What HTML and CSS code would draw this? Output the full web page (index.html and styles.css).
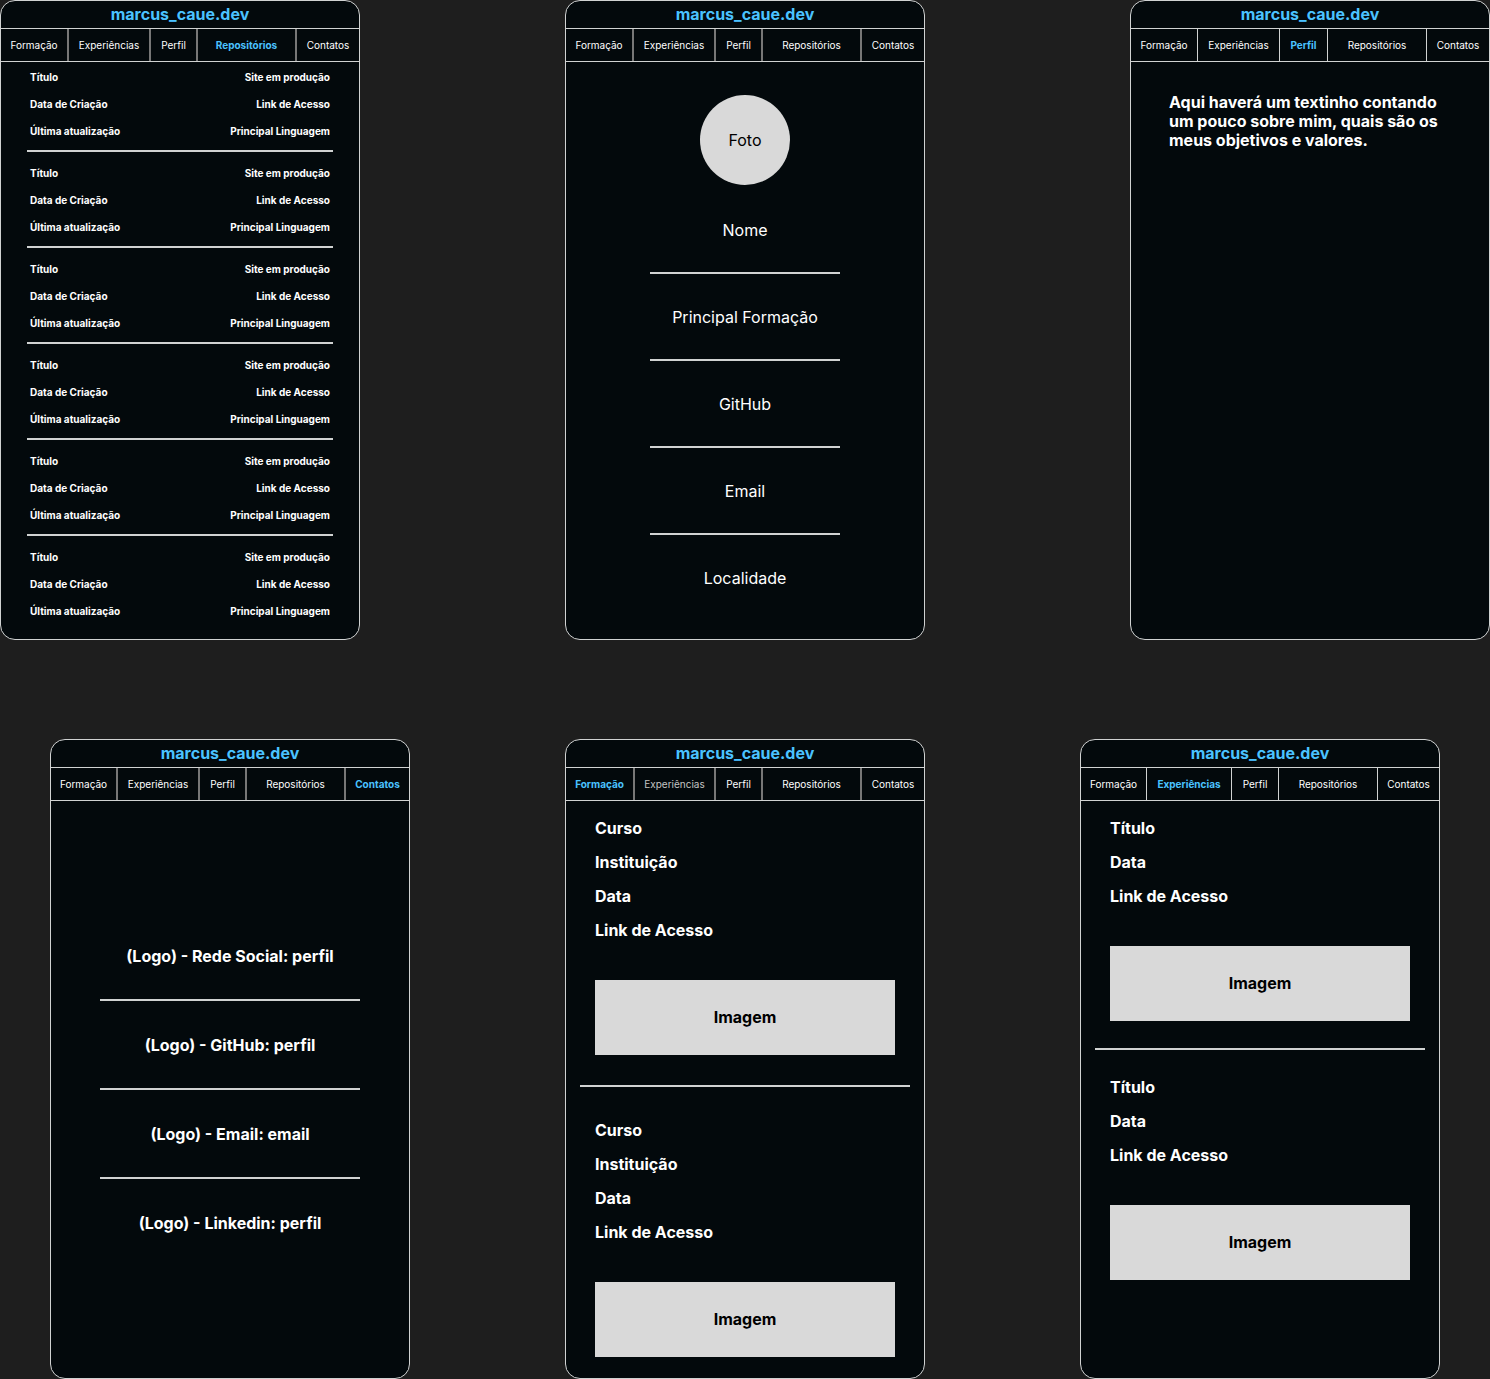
FILE: index.html
```html
<!DOCTYPE html>
<html lang="pt-BR">
<head>
  <meta charset="utf-8">
  <meta name="viewport" content="width=device-width, initial-scale=1">
  <title>marcus_caue.dev</title>
  <link rel="stylesheet" href="styles.css">
</head>
<body>
  <main class="board">
    <div class="board-row">

      <section class="screen">
        <h2 class="brand">marcus_caue.dev</h2>
        <nav class="tabs">
          <a href="#formacao">Formação</a>
          <a href="#experiencias">Experiências</a>
          <a href="#perfil">Perfil</a>
          <a href="#repositorios" class="active">Repositórios</a>
          <a href="#contatos">Contatos</a>
        </nav>
        <ul class="repos" id="repositorios">
          <li><span>Título</span><span>Site em produção</span><span>Data de Criação</span><a href="#repo-1">Link de Acesso</a><span>Última atualização</span><span>Principal Linguagem</span></li>
          <li><span>Título</span><span>Site em produção</span><span>Data de Criação</span><a href="#repo-2">Link de Acesso</a><span>Última atualização</span><span>Principal Linguagem</span></li>
          <li><span>Título</span><span>Site em produção</span><span>Data de Criação</span><a href="#repo-3">Link de Acesso</a><span>Última atualização</span><span>Principal Linguagem</span></li>
          <li><span>Título</span><span>Site em produção</span><span>Data de Criação</span><a href="#repo-4">Link de Acesso</a><span>Última atualização</span><span>Principal Linguagem</span></li>
          <li><span>Título</span><span>Site em produção</span><span>Data de Criação</span><a href="#repo-5">Link de Acesso</a><span>Última atualização</span><span>Principal Linguagem</span></li>
          <li><span>Título</span><span>Site em produção</span><span>Data de Criação</span><a href="#repo-6">Link de Acesso</a><span>Última atualização</span><span>Principal Linguagem</span></li>
        </ul>
      </section>

      <section class="screen">
        <h2 class="brand">marcus_caue.dev</h2>
        <nav class="tabs">
          <a href="#formacao">Formação</a>
          <a href="#experiencias">Experiências</a>
          <a href="#perfil">Perfil</a>
          <a href="#repositorios">Repositórios</a>
          <a href="#contatos">Contatos</a>
        </nav>
        <div class="home">
          <div class="photo">Foto</div>
          <ul class="facts">
            <li>Nome</li>
            <li>Principal Formação</li>
            <li>GitHub</li>
            <li>Email</li>
            <li>Localidade</li>
          </ul>
        </div>
      </section>

      <section class="screen">
        <h2 class="brand">marcus_caue.dev</h2>
        <nav class="tabs tabs-perfil">
          <a href="#formacao">Formação</a>
          <a href="#experiencias">Experiências</a>
          <a href="#perfil" class="active">Perfil</a>
          <a href="#repositorios">Repositórios</a>
          <a href="#contatos">Contatos</a>
        </nav>
        <p class="about" id="perfil">Aqui haverá um textinho contando um pouco sobre mim, quais são os meus objetivos e valores.</p>
      </section>
    </div>

    <div class="board-row board-row-inset">

      <section class="screen">
        <h2 class="brand">marcus_caue.dev</h2>
        <nav class="tabs tabs-contatos">
          <a href="#formacao">Formação</a>
          <a href="#experiencias">Experiências</a>
          <a href="#perfil">Perfil</a>
          <a href="#repositorios">Repositórios</a>
          <a href="#contatos" class="active">Contatos</a>
        </nav>
        <ul class="contacts" id="contatos">
          <li>(Logo) - Rede Social: perfil</li>
          <li>(Logo) - GitHub: perfil</li>
          <li>(Logo) - Email: email</li>
          <li>(Logo) - Linkedin: perfil</li>
        </ul>
      </section>

      <section class="screen">
        <h2 class="brand">marcus_caue.dev</h2>
        <nav class="tabs tabs-formacao">
          <a href="#formacao" class="active">Formação</a>
          <a href="#experiencias" class="muted">Experiências</a>
          <a href="#perfil">Perfil</a>
          <a href="#repositorios">Repositórios</a>
          <a href="#contatos">Contatos</a>
        </nav>
        <div class="entries" id="formacao">
          <article class="entry">
            <span>Curso</span>
            <span>Instituição</span>
            <span>Data</span>
            <a href="#curso-1">Link de Acesso</a>
            <div class="image">Imagem</div>
          </article>
          <article class="entry">
            <span>Curso</span>
            <span>Instituição</span>
            <span>Data</span>
            <a href="#curso-2">Link de Acesso</a>
            <div class="image">Imagem</div>
          </article>
        </div>
      </section>

      <section class="screen">
        <h2 class="brand">marcus_caue.dev</h2>
        <nav class="tabs tabs-experiencias">
          <a href="#formacao">Formação</a>
          <a href="#experiencias" class="active">Experiências</a>
          <a href="#perfil">Perfil</a>
          <a href="#repositorios">Repositórios</a>
          <a href="#contatos">Contatos</a>
        </nav>
        <div class="entries entries-compact" id="experiencias">
          <article class="entry">
            <span>Título</span>
            <span>Data</span>
            <a href="#experiencia-1">Link de Acesso</a>
            <div class="image">Imagem</div>
          </article>
          <article class="entry">
            <span>Título</span>
            <span>Data</span>
            <a href="#experiencia-2">Link de Acesso</a>
            <div class="image">Imagem</div>
          </article>
        </div>
      </section>
    </div>
  </main>
</body>
</html>
```
FILE: styles.css
```css
:root {
  --canvas: #1e1e1e;
  --surface: #03090c;
  --fill: #d9d9d9;
  --line: #d0d2d2;
  --line-soft: #777777;
  --accent: #4ac2ff;
}

* {
  box-sizing: border-box;
}

body {
  margin: 0;
  background: var(--canvas);
  color: #ffffff;
  font: 16px/19px Inter, sans-serif;
}

a {
  color: inherit;
  text-decoration: none;
}

ul {
  margin: 0;
  padding: 0;
  list-style: none;
}

/* Board: two rows of phone screens */
.board {
  display: flex;
  flex-direction: column;
  gap: 99px;
}

.board-row {
  display: flex;
  flex-wrap: wrap;
  justify-content: space-between;
  row-gap: 99px;
}

.board-row-inset {
  padding: 0 50px;
}

.screen {
  display: flex;
  flex-direction: column;
  width: 360px;
  max-width: 100%;
  min-height: 640px;
  border: 1px solid var(--line);
  border-radius: 15px;
  background: var(--surface);
}

.brand {
  margin: 0;
  padding: 4px 0;
  border-bottom: 1px solid var(--line);
  color: var(--accent);
  font-size: 16px;
  font-weight: 700;
  text-align: center;
}

/* Navigation tabs */
.tabs {
  --divider: 2px solid var(--line-soft);
  display: grid;
  grid-template-columns: 68px 82px 47px 99px 1fr;
  border-bottom: 1px solid var(--line);
  font-size: 10px;
  line-height: 32px;
  text-align: center;
}

.tabs a {
  border-right: var(--divider);
}

.tabs a:last-child {
  border-right: 0;
}

.tabs .active {
  color: var(--accent);
  font-weight: 700;
}

.tabs .muted {
  color: #c4c4c4;
}

.tabs-perfil {
  --divider: 1px solid var(--line);
  grid-template-columns: 67px 82px 48px 99px 1fr;
}

.tabs-contatos {
  grid-template-columns: 67px 82px 47px 99px 1fr;
}

.tabs-formacao {
  grid-template-columns: 69px 81px 47px 99px 1fr;
}

.tabs-experiencias {
  --divider: 1px solid var(--line);
  grid-template-columns: 66px 85px 47px 99px 1fr;
}

/* Repositórios */
.repos {
  padding: 0 26px;
  font-size: 10px;
  font-weight: 700;
  line-height: 12px;
}

.repos li {
  display: grid;
  grid-template-columns: 1fr 1fr;
  row-gap: 15px;
  padding: 15px 3px 13px;
  border-bottom: 2px solid var(--line);
}

.repos li:first-child {
  padding-top: 9px;
}

.repos li:last-child {
  border-bottom: 0;
}

.repos li > :nth-child(even) {
  text-align: right;
}

/* Home */
.home {
  display: flex;
  flex-direction: column;
  align-items: center;
  padding-top: 33px;
}

.photo {
  display: grid;
  place-items: center;
  width: 90px;
  height: 90px;
  border-radius: 50%;
  background: var(--fill);
  color: #000000;
}

.facts {
  width: 190px;
  text-align: center;
}

.facts li {
  padding: 34px 0 32px;
  border-bottom: 2px solid var(--line);
}

.facts li:first-child {
  padding-top: 36px;
}

.facts li:last-child {
  border-bottom: 0;
}

/* Perfil */
.about {
  margin: 0;
  padding: 31px 38px;
  font-weight: 700;
}

/* Contatos */
.contacts {
  width: 260px;
  margin: auto;
  font-weight: 700;
  text-align: center;
}

.contacts li + li {
  margin-top: 33px;
  padding-top: 35px;
  border-top: 2px solid var(--line);
}

/* Formação and Experiências */
.entries {
  padding: 18px 14px 0;
  font-weight: 700;
}

.entry {
  display: flex;
  flex-direction: column;
  gap: 15px;
  padding: 0 15px;
}

.entry + .entry {
  margin-top: 30px;
  padding-top: 34px;
  border-top: 2px solid var(--line);
}

.entries-compact .entry + .entry {
  margin-top: 27px;
  padding-top: 28px;
}

.image {
  display: grid;
  place-items: center;
  height: 75px;
  margin-top: 25px;
  background: var(--fill);
  color: #000000;
}
```
